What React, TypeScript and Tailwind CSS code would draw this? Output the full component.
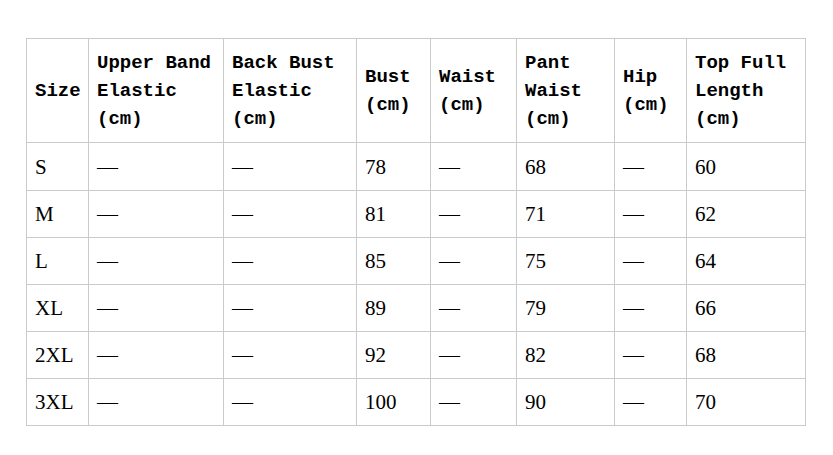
const headers: string[][] = [
  ['Size'],
  ['Upper Band', 'Elastic', '(cm)'],
  ['Back Bust', 'Elastic', '(cm)'],
  ['Bust', '(cm)'],
  ['Waist', '(cm)'],
  ['Pant', 'Waist', '(cm)'],
  ['Hip', '(cm)'],
  ['Top Full', 'Length', '(cm)'],
];

const widths = [62, 135, 133, 74, 86, 98, 72, 119];

const rows: string[][] = [
  ['S', '—', '—', '78', '—', '68', '—', '60'],
  ['M', '—', '—', '81', '—', '71', '—', '62'],
  ['L', '—', '—', '85', '—', '75', '—', '64'],
  ['XL', '—', '—', '89', '—', '79', '—', '66'],
  ['2XL', '—', '—', '92', '—', '82', '—', '68'],
  ['3XL', '—', '—', '100', '—', '90', '—', '70'],
];

export default function App() {
  return (
    <div className="w-[833px] h-[455px] bg-white pt-[38px] pl-[26px]">
      <table className="table-fixed border-collapse w-[779px] text-black">
        <colgroup>
          {widths.map((w, i) => (
            <col key={i} style={{ width: w }} />
          ))}
        </colgroup>
        <thead>
          <tr className="h-[104px]">
            {headers.map((lines, i) => (
              <th
                key={i}
                className="border border-[#cbcbcb] pl-[8px] pr-0 text-left align-middle font-bold whitespace-nowrap text-[19px] leading-[28px] font-['Liberation_Mono',monospace]"
              >
                {lines.map((l, j) => (
                  <div key={j}>{l}</div>
                ))}
              </th>
            ))}
          </tr>
        </thead>
        <tbody>
          {rows.map((r, i) => (
            <tr key={i} className={i === 0 ? 'h-[48px]' : 'h-[47px]'}>
              {r.map((c, j) => (
                <td
                  key={j}
                  className="border border-[#cbcbcb] pl-[8px] text-left align-middle whitespace-nowrap text-[21px] leading-[24px] font-['Liberation_Serif',serif]"
                >
                  {c}
                </td>
              ))}
            </tr>
          ))}
        </tbody>
      </table>
    </div>
  );
}
